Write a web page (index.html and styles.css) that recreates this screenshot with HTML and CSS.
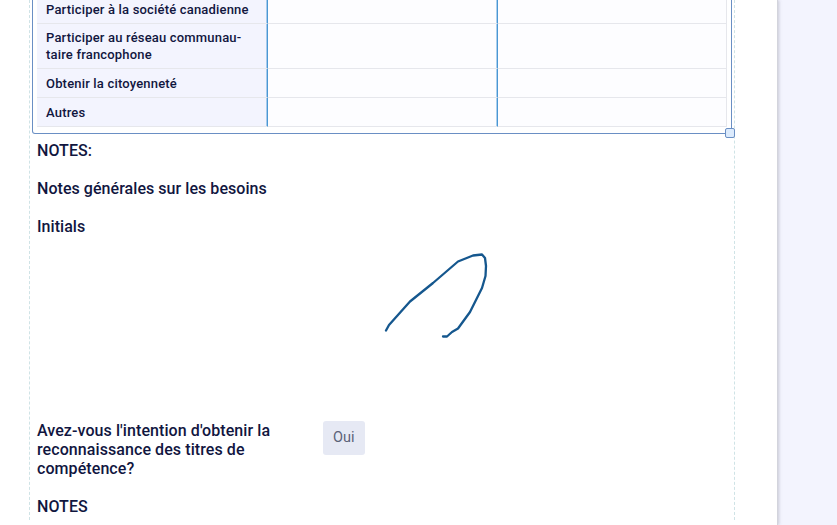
FILE: index.html
```html
<!DOCTYPE html>
<html lang="fr">
<head>
<meta charset="utf-8">
<title>Besoins</title>
<link rel="stylesheet" href="styles.css">
</head>
<body>
<div class="page">
  <main class="sheet">
    <div class="column">
      <div class="table-frame">
        <table class="needs">
          <tbody>
            <tr><th>Participer à la société canadienne</th><td></td><td></td></tr>
            <tr><th>Participer au réseau communau-<br>taire francophone</th><td></td><td></td></tr>
            <tr><th>Obtenir la citoyenneté</th><td></td><td></td></tr>
            <tr><th>Autres</th><td></td><td></td></tr>
          </tbody>
        </table>
        <span class="handle"></span>
      </div>
      <p class="label first">NOTES:</p>
      <p class="label">Notes générales sur les besoins</p>
      <p class="label">Initials</p>
      <svg class="signature" width="698" height="181" viewBox="0 0 698 181">
        <path d="M356 90.500 L359 85 L380 61.500 L403 43 L428 21.500 L443 15.500 L452 14.500 L455 18 L456 26 L455.500 36 L452 48 L440 72 L428 88.500 L422 92 L417 96.500 L413 96.500"/>
      </svg>
      <div class="question">
        <p class="question-text">Avez-vous l'intention d'obtenir la reconnaissance des titres de compétence?</p>
        <span class="answer">Oui</span>
      </div>
      <p class="label notes">NOTES</p>
    </div>
  </main>
</div>
</body>
</html>
```

FILE: styles.css
```css
* { box-sizing: border-box; }
html, body { margin: 0; height: 525px; overflow: hidden; }
body { background: #f3f4fe; font-family: Roboto, "Liberation Sans", sans-serif; color: #11163f; }
.page { display: flex; height: 525px; overflow: hidden; }
.sheet { width: 778px; height: 525px; background: #fff; padding-left: 29px; border-right: 1px solid #d3d4dc; box-shadow: 1px 0 3px rgba(120,120,140,.35); overflow: hidden; }
.column { width: 706px; height: 525px; border-left: 1px dashed #cfe3e6; border-right: 1px dashed #cfe3e6; padding-left: 7px; }
.table-frame { position: relative; width: 700px; margin-left: -5px; margin-top: -5px; padding: 0 4px 6px 4px; border: 1px solid #6a8fc4; border-top: 0; border-radius: 0 0 3px 3px; }
.needs { width: 690px; border-collapse: separate; border-spacing: 0; table-layout: fixed; background: #fdfdff; }
.needs th, .needs td { height: 29px; border-bottom: 1px solid #e6e7ec; }
.needs th { width: 231px; padding: 5px 9px; font-size: 13px; line-height: 17px; font-weight: 500; letter-spacing: .18px; text-align: left; background: #f3f4fe; border-right: 1px solid #4a97d4; box-shadow: inset -1px 0 0 rgba(74,151,212,.45); }
.needs td { width: 230px; border-right: 1px solid #4a97d4; box-shadow: inset -1px 0 0 rgba(74,151,212,.45); }
.needs td:last-child { width: 229px; border-right: 1px solid #e6e7ec; box-shadow: none; }
.handle { position: absolute; right: -4px; bottom: -5px; width: 10px; height: 10px; background: #dcebfd; border: 1px solid #6a8fc4; border-radius: 2px; }
.label { margin: 0; font-size: 16px; line-height: 19px; font-weight: 500; letter-spacing: .05px; margin-top: 19px; }
.label.first { margin-top: 7px; }
.signature { display: block; margin: 4px 0 0 -7px; }
.signature path { fill: none; stroke: #15578e; stroke-width: 2.300; stroke-linejoin: round; stroke-linecap: round; }
.question { display: flex; gap: 26px; align-items: flex-start; }
.question-text { margin: 0; width: 260px; font-size: 16px; line-height: 19px; font-weight: 500; letter-spacing: .08px; }
.answer { display: block; padding: 8px 10px; font-size: 14.500px; line-height: 18px; color: #5b6278; background: #e6e9f4; border-radius: 3px; }
.notes { margin-top: 19px; }
```
